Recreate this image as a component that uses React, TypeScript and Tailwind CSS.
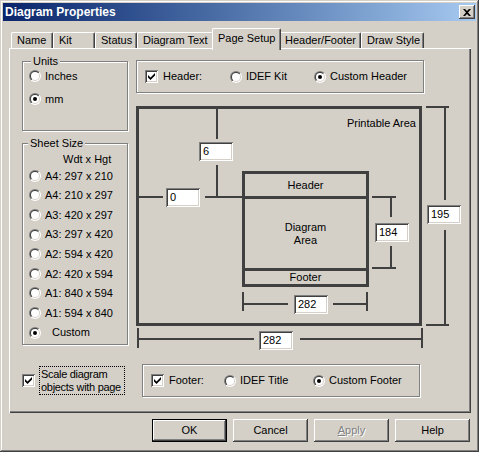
import React from 'react';

const TABS = [
  { label: 'Name', w: 'w-[42px]' },
  { label: 'Kit', w: 'w-[42px]' },
  { label: 'Status', w: 'w-[42px]' },
  { label: 'Diagram Text', w: 'w-[77px]' },
  { label: 'Page Setup', w: 'w-[69px]', active: true },
  { label: 'Header/Footer', w: 'w-[82px]' },
  { label: 'Draw Style', w: 'w-[63px]' },
];

const SHEETS = [
  'A4: 297 x 210',
  'A4: 210 x 297',
  'A3: 420 x 297',
  'A3: 297 x 420',
  'A2: 594 x 420',
  'A2: 420 x 594',
  'A1: 840 x 594',
  'A1: 594 x 840',
];

function Radio({ on }: { on?: boolean }) {
  return (
    <svg width="12" height="12" viewBox="0 0 12 12" className="shrink-0">
      <defs>
        <linearGradient id="rOuter" x1="0" y1="0" x2="1" y2="1">
          <stop offset="0.5" stopColor="#808080" />
          <stop offset="0.5" stopColor="#ffffff" />
        </linearGradient>
        <linearGradient id="rInner" x1="0" y1="0" x2="1" y2="1">
          <stop offset="0.5" stopColor="#404040" />
          <stop offset="0.5" stopColor="#d4d0c8" />
        </linearGradient>
      </defs>
      <circle cx="6" cy="6" r="6" fill="url(#rOuter)" />
      <circle cx="6" cy="6" r="5" fill="url(#rInner)" />
      <circle cx="6" cy="6" r="4" fill="#fff" />
      {on && <circle cx="6" cy="6" r="2" fill="#000" />}
    </svg>
  );
}

function Check() {
  return (
    <div className="w-[13px] h-[13px] shrink-0 bg-white flex items-center justify-center shadow-[inset_1px_1px_#808080,inset_-1px_-1px_#fff,inset_2px_2px_#404040,inset_-2px_-2px_#d4d0c8]">
      <svg width="7" height="7" viewBox="0 0 7 7">
        <path d="M0 2 L2.5 4.5 L7 0 L7 2.5 L2.5 7 L0 4.5 Z" fill="#000" />
      </svg>
    </div>
  );
}

function Group({ label, className, labelPos, children }: { label?: string; className: string; labelPos?: string; children?: React.ReactNode }) {
  return (
    <div className={`relative border border-[#808080] shadow-[inset_1px_1px_#fff,1px_1px_#fff] ${className}`}>
      {label && (
        <span className={`absolute -top-[7px] px-[2px] bg-[#d4d0c8] leading-[13px] ${labelPos}`}>{label}</span>
      )}
      {children}
    </div>
  );
}

function Edit({ v, className }: { v: string; className: string }) {
  return (
    <div className={`absolute w-[34px] h-[19px] bg-white pl-[4px] leading-[19px] shadow-[inset_1px_1px_#808080,inset_-1px_-1px_#fff,inset_2px_2px_#404040,inset_-2px_-2px_#d4d0c8] ${className}`}>
      {v}
    </div>
  );
}

function Btn({ label, def, disabled }: { label: React.ReactNode; def?: boolean; disabled?: boolean }) {
  return (
    <div
      className={`w-[75px] h-[23px] flex items-center justify-center ${
        def
          ? 'border border-black shadow-[inset_-1px_-1px_#404040,inset_1px_1px_#fff,inset_-2px_-2px_#808080]'
          : 'shadow-[inset_-1px_-1px_#404040,inset_1px_1px_#fff,inset_-2px_-2px_#808080]'
      } ${disabled ? 'text-[#808080] [text-shadow:1px_1px_#fff]' : ''}`}
    >
      {label}
    </div>
  );
}

export default function App() {
  return (
    <div className="w-[479px] h-[452px] p-[3px] bg-[#d4d0c8] text-black text-[11px] font-['Liberation_Sans',Arial,sans-serif] shadow-[inset_-1px_-1px_#404040,inset_1px_1px_#d4d0c8,inset_-2px_-2px_#808080,inset_2px_2px_#fff] overflow-hidden">
      {/* title bar */}
      <div className="h-[18px] flex items-center pl-[2px] pr-[1px] bg-gradient-to-r from-[#0a246a] to-[#a6caf0]">
        <span className="flex-1 text-white font-bold text-[12px]">Diagram Properties</span>
        <div className="w-[16px] h-[14px] bg-[#d4d0c8] flex items-center justify-center shadow-[inset_-1px_-1px_#404040,inset_1px_1px_#fff,inset_-2px_-2px_#808080]">
          <svg width="8" height="7" viewBox="0 0 8 7">
            <path d="M0 0 H2 L4 2 L6 0 H8 L5 3.5 L8 7 H6 L4 5 L2 7 H0 L3 3.5 Z" fill="#000" />
          </svg>
        </div>
      </div>

      {/* tabs */}
      <div className="mt-[7px] ml-[8px] h-[20px] flex items-end">
        {TABS.map(t => (
          <div
            key={t.label}
            className={`${t.w} border-l border-t border-white border-r border-r-[#404040] shadow-[inset_-1px_0_#808080] rounded-t-[2px] pl-[5px] leading-[13px] bg-[#d4d0c8] whitespace-nowrap ${
              t.active ? 'relative z-10 h-[22px] -mb-[2px] -mx-[2px] pt-[3px]' : 'h-[16px] pt-[1px]'
            }`}
          >
            {t.label}
          </div>
        ))}
      </div>

      {/* panel */}
      <div className="ml-[6px] w-[462px] h-[365px] flex flex-col shadow-[inset_1px_1px_#fff,inset_-1px_-1px_#404040,inset_-2px_-2px_#808080]">
        <div className="flex">
          {/* left column */}
          <div className="ml-[13px] w-[106px]">
            <Group label="Units" labelPos="left-[8px]" className="mt-[13px] h-[70px] pl-[6px] pt-[4px] flex flex-col gap-[3px]">
              <div className="h-[20px] flex items-center gap-[4px]"><Radio />Inches</div>
              <div className="h-[20px] flex items-center gap-[4px]"><Radio on />mm</div>
            </Group>
            <Group label="Sheet Size" labelPos="left-[5px]" className="mt-[12px] h-[202px] pl-[6px] pt-[8px]">
              <div className="h-[14px] leading-[14px] pl-[34px]">Wdt x Hgt</div>
              {SHEETS.map(s => (
                <div key={s} className="h-[19.6px] flex items-center gap-[4px]"><Radio />{s}</div>
              ))}
              <div className="h-[19.6px] flex items-center gap-[11px]"><Radio on />Custom</div>
            </Group>
          </div>

          {/* right column */}
          <div className="ml-[8px]">
            <Group className="mt-[12px] w-[288px] h-[33px] pl-[8px] flex items-center">
              <div className="w-[85px] flex items-center gap-[5px]"><Check />Header:</div>
              <div className="w-[84px] flex items-center gap-[4px]"><Radio />IDEF Kit</div>
              <div className="flex items-center gap-[4px]"><Radio on />Custom Header</div>
            </Group>

            {/* page diagram */}
            <div className="relative mt-[7px] w-[330px] h-[252px]">
              <div className="absolute left-0 top-[6px] w-[286px] h-[220px] border-[3px] border-[#404040]">
                <span className="absolute right-[3px] top-[8px] leading-[13px]">Printable Area</span>
              </div>

              <div className="absolute left-[106px] top-[71px] w-[127px] h-[116px] border-[3px] border-[#404040] flex flex-col text-center leading-[13px]">
                <div className="h-[25px] border-b-[3px] border-[#404040] flex items-center justify-center">Header</div>
                <div className="h-[72px] border-b-[3px] border-[#404040] flex items-center justify-center">Diagram<br />Area</div>
                <div className="flex-1 flex items-center justify-center">Footer</div>
              </div>

              {/* top margin: 6 */}
              <div className="absolute left-[80px] top-[9px] w-[2px] h-[30px] bg-[#404040]" />
              <Edit v="6" className="left-[63px] top-[42px]" />
              <div className="absolute left-[80px] top-[65px] w-[2px] h-[32px] bg-[#404040]" />

              {/* left margin: 0 */}
              <div className="absolute left-[1px] top-[96px] w-[26px] h-[2px] bg-[#404040]" />
              <Edit v="0" className="left-[30px] top-[88px]" />
              <div className="absolute left-[69px] top-[96px] w-[38px] h-[2px] bg-[#404040]" />

              {/* diagram height: 184 */}
              <div className="absolute left-[236px] top-[96px] w-[24px] h-[2px] bg-[#404040]" />
              <div className="absolute left-[254px] top-[96px] w-[2px] h-[21px] bg-[#404040]" />
              <Edit v="184" className="left-[239px] top-[123px]" />
              <div className="absolute left-[254px] top-[146px] w-[2px] h-[23px] bg-[#404040]" />
              <div className="absolute left-[236px] top-[167px] w-[24px] h-[2px] bg-[#404040]" />

              {/* diagram width: 282 */}
              <div className="absolute left-[106px] top-[192px] w-[2px] h-[19px] bg-[#404040]" />
              <div className="absolute left-[230px] top-[192px] w-[2px] h-[19px] bg-[#404040]" />
              <div className="absolute left-[106px] top-[203px] w-[46px] h-[2px] bg-[#404040]" />
              <Edit v="282" className="left-[158px] top-[195px]" />
              <div className="absolute left-[197px] top-[203px] w-[35px] h-[2px] bg-[#404040]" />

              {/* page width: 282 */}
              <div className="absolute left-[1px] top-[228px] w-[2px] h-[20px] bg-[#404040]" />
              <div className="absolute left-[285px] top-[228px] w-[2px] h-[20px] bg-[#404040]" />
              <div className="absolute left-[1px] top-[238px] w-[117px] h-[2px] bg-[#404040]" />
              <Edit v="282" className="left-[123px] top-[231px]" />
              <div className="absolute left-[164px] top-[238px] w-[122px] h-[2px] bg-[#404040]" />

              {/* page height: 195 */}
              <div className="absolute left-[290px] top-[6px] w-[23px] h-[2px] bg-[#404040]" />
              <div className="absolute left-[308px] top-[6px] w-[2px] h-[94px] bg-[#404040]" />
              <Edit v="195" className="left-[291px] top-[105px]" />
              <div className="absolute left-[308px] top-[130px] w-[2px] h-[95px] bg-[#404040]" />
              <div className="absolute left-[290px] top-[224px] w-[23px] h-[2px] bg-[#404040]" />
            </div>
          </div>
        </div>

        {/* bottom row */}
        <div className="mt-[12px] flex items-start">
          <div className="ml-[13px] mt-[2px] flex items-center">
            <Check />
            <div className="ml-[4px] w-[86px] h-[29px] border border-dotted border-black px-[1px] pt-[1px] leading-[13px] whitespace-nowrap tracking-[-0.3px] overflow-hidden">
              Scale diagram<br />objects with page
            </div>
          </div>
          <Group className="ml-[17px] w-[278px] h-[33px] pl-[8px] flex items-center">
            <div className="w-[73px] flex items-center gap-[5px]"><Check />Footer:</div>
            <div className="w-[89px] flex items-center gap-[4px]"><Radio />IDEF Title</div>
            <div className="flex items-center gap-[4px]"><Radio on />Custom Footer</div>
          </Group>
        </div>
      </div>

      {/* buttons */}
      <div className="mt-[6px] pr-[6px] flex justify-end gap-[6px]">
        <Btn label="OK" def />
        <Btn label="Cancel" />
        <Btn label={<span><span className="underline">A</span>pply</span>} disabled />
        <Btn label="Help" />
      </div>
    </div>
  );
}
